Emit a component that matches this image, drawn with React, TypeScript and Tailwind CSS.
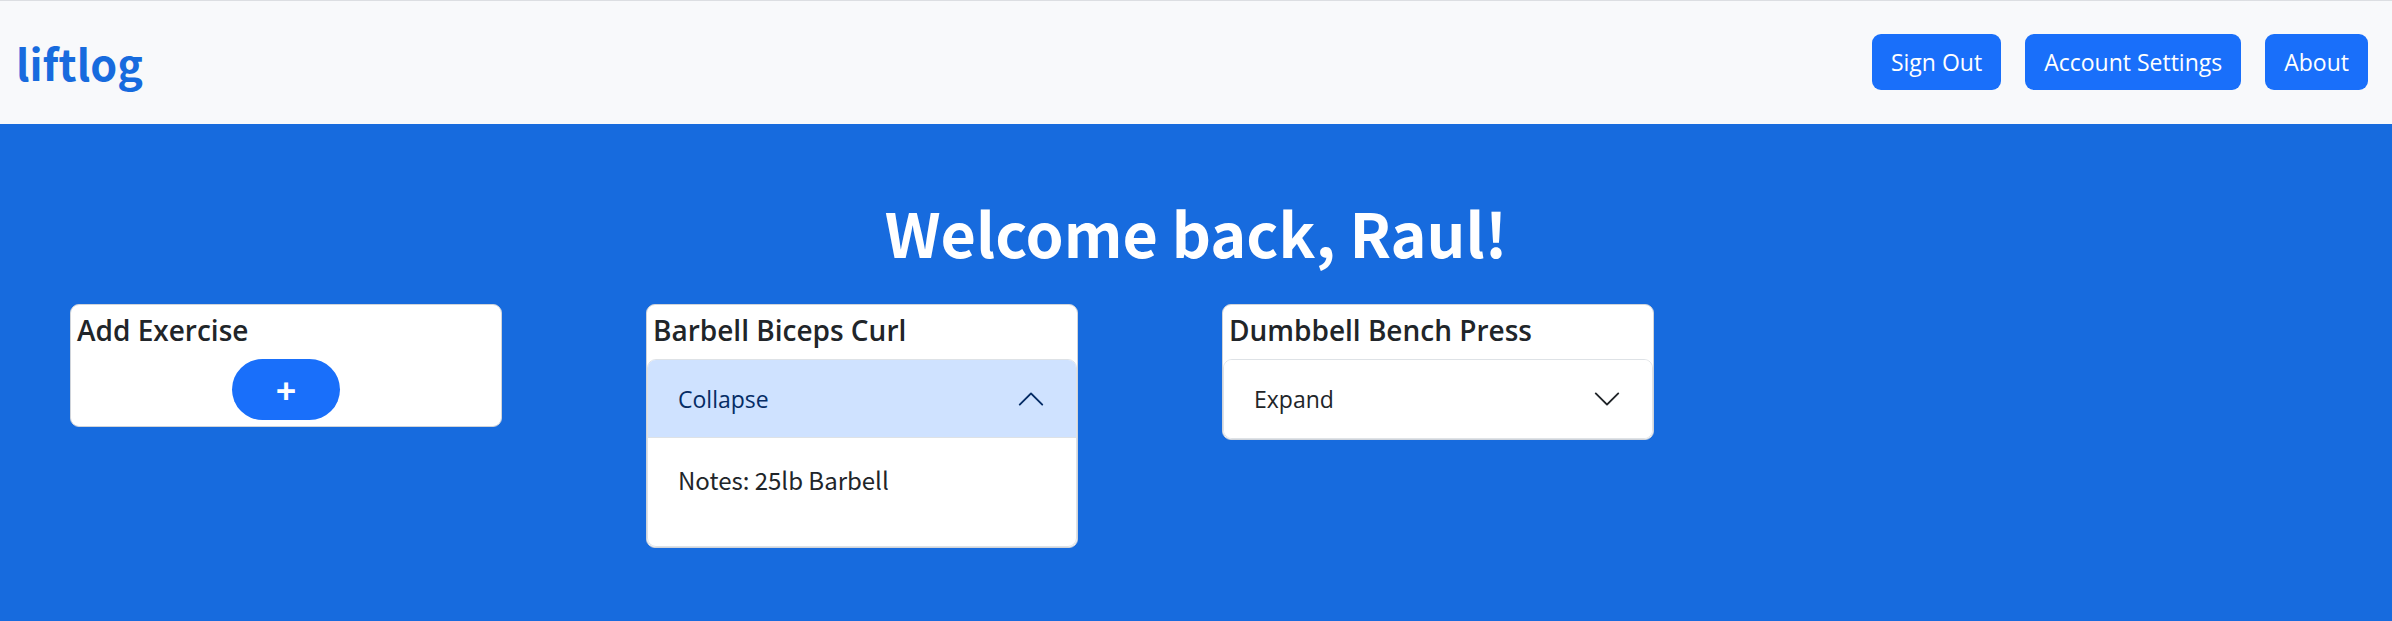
import { useState } from "react";
import type { ReactNode } from "react";

const navItems = ["Sign Out", "Account Settings", "About"];

type Exercise = { name: string; notes: string; open: boolean };

const exercises: Exercise[] = [
  { name: "Barbell Biceps Curl", notes: "Notes: 25lb Barbell", open: true },
  { name: "Dumbbell Bench Press", notes: "", open: false },
];

function Chevron({ open }: { open: boolean }) {
  return (
    <svg
      viewBox="0 0 16 16"
      className={open ? "size-[30px] rotate-180" : "size-[30px]"}
      fill="currentColor"
      aria-hidden="true"
    >
      <path
        fillRule="evenodd"
        d="M1.646 4.646a.5.5 0 0 1 .708 0L8 10.293l5.646-5.647a.5.5 0 0 1 .708.708l-6 6a.5.5 0 0 1-.708 0l-6-6a.5.5 0 0 1 0-.708z"
      />
    </svg>
  );
}

function Card({ title, children }: { title: string; children: ReactNode }) {
  return (
    <section className="w-full max-w-[432px] overflow-hidden rounded-[9px] border border-[#d0d4da] bg-white">
      <h2 className="px-1.5 pt-1.5 pb-2.5 font-['Open_Sans','Noto_Sans',sans-serif] text-[28px] leading-[38px] font-semibold">
        {title}
      </h2>
      {children}
    </section>
  );
}

function ExerciseCard({ exercise }: { exercise: Exercise }) {
  const [open, setOpen] = useState(exercise.open);
  return (
    <Card title={exercise.name}>
      <div className="overflow-hidden rounded-[9px] border border-[#dee2e6]">
        <button
          type="button"
          aria-expanded={open}
          onClick={() => setOpen(!open)}
          className={
            open
              ? "flex w-full items-center justify-between bg-[#cfe2ff] px-[30px] py-6 text-[#052c65] shadow-[inset_0_-1px_0_#dee2e6]"
              : "flex w-full items-center justify-between bg-white px-[30px] py-6"
          }
        >
          <span className="font-['Open_Sans','Noto_Sans',sans-serif] text-[23px] leading-[30px]">
            {open ? "Collapse" : "Expand"}
          </span>
          <Chevron open={open} />
        </button>
        {open && <p className="px-[30px] pt-6 pb-12 text-2xl leading-9">{exercise.notes}</p>}
      </div>
    </Card>
  );
}

export default function App() {
  return (
    <div className="flex min-h-screen flex-col bg-[#176bde] font-['Noto_Sans_CJK_SC',sans-serif] text-[#212529]">
      <header className="flex items-center justify-between border-t border-[#dcdee2] bg-[#f8f9fb] pt-[33px] pr-6 pb-[34px] pl-4">
        <a href="#" className="text-[43px] leading-[56px] font-bold text-[#176bde]">
          liftlog
        </a>
        <nav className="flex gap-6">
          {navItems.map((item) => (
            <button
              key={item}
              type="button"
              className="rounded-[9px] bg-[#196ffa] px-[19px] py-2.5 font-['Open_Sans','Noto_Sans',sans-serif] text-[23px] leading-9 text-white"
            >
              {item}
            </button>
          ))}
        </nav>
      </header>
      <main className="flex-1 px-11 pt-[66px] pb-16">
        <h1 className="text-center text-[61px] leading-[84px] font-bold text-white">Welcome back, Raul!</h1>
        <div className="mt-[30px] grid grid-cols-4 items-start">
          <div className="px-[26px]">
            <Card title="Add Exercise">
              <div className="flex justify-center pb-1.5">
                <button
                  type="button"
                  aria-label="Add exercise"
                  className="w-[108px] rounded-full bg-[#196ffa] pt-3.5 pb-[11px] font-['Open_Sans','Noto_Sans',sans-serif] text-4xl leading-9 font-bold text-white"
                >
                  +
                </button>
              </div>
            </Card>
          </div>
          {exercises.map((exercise) => (
            <div key={exercise.name} className="px-[26px]">
              <ExerciseCard exercise={exercise} />
            </div>
          ))}
        </div>
      </main>
    </div>
  );
}
